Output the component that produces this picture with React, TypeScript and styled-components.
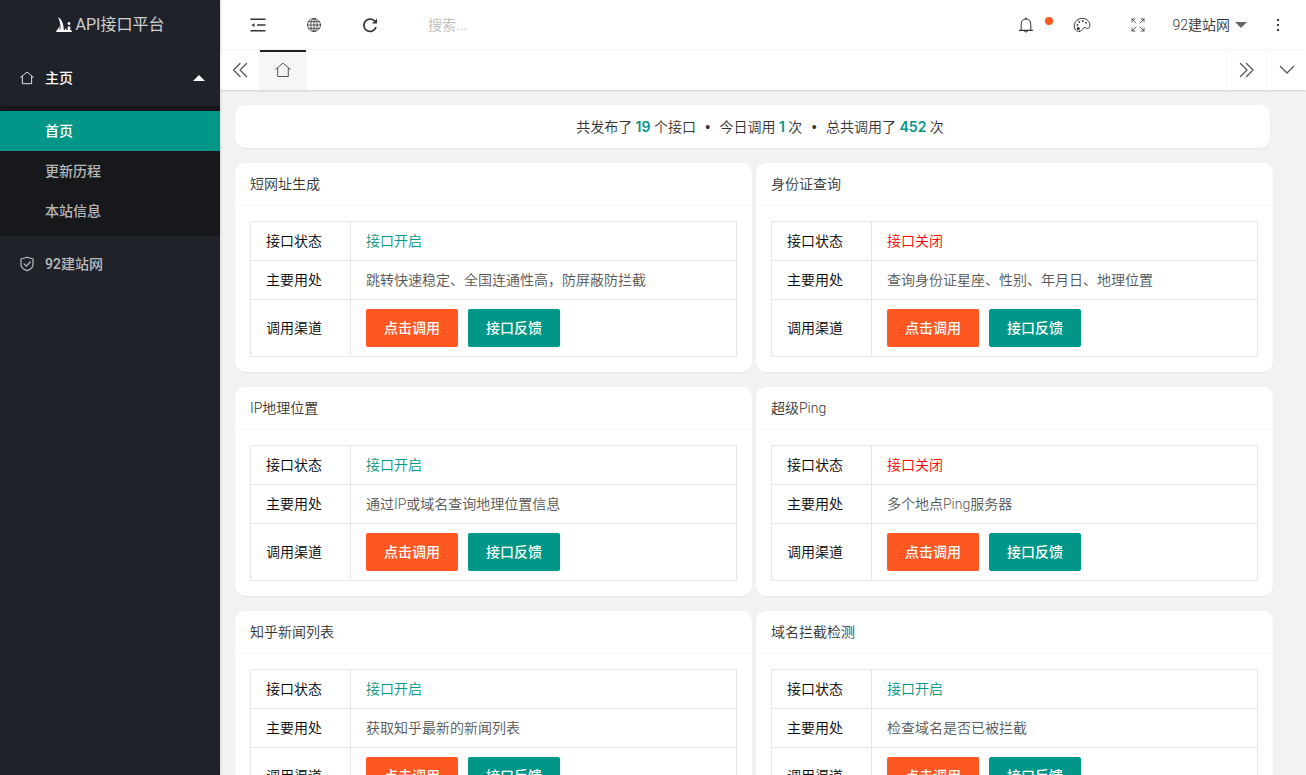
import React from "react";
import styled, { createGlobalStyle } from "styled-components";

const GlobalStyle = createGlobalStyle`
  *, *::before, *::after { box-sizing: border-box; }
  body {
    margin: 0;
    background: #f2f2f2;
    color: #333;
    font: 350 14px/20px Roboto, "Noto Sans CJK SC", sans-serif;
  }
  a { color: inherit; text-decoration: none; }
  ul { list-style: none; margin: 0; padding: 0; }
  button, input { font: inherit; border: 0; background: none; padding: 0; margin: 0; }
  button { cursor: pointer; }
  svg { display: block; flex: none; }
`;

const Shell = styled.div`
  display: flex;
  height: 100vh;
  overflow: hidden;
`;

const Sidebar = styled.aside`
  flex: 0 0 220px;
  background: #20222a;
  color: rgba(255, 255, 255, 0.7);
  box-shadow: 1px 0 2px rgba(0, 0, 0, 0.1);
  z-index: 2;
`;

const Brand = styled.a`
  display: flex;
  align-items: center;
  justify-content: center;
  gap: 4px;
  height: 50px;
  font-size: 16px;
  font-weight: 400;
  color: rgba(255, 255, 255, 0.8);
  box-shadow: 0 1px 2px rgba(0, 0, 0, 0.15);
`;

const NavLink = styled.a<{ $open?: boolean }>`
  display: flex;
  align-items: center;
  gap: 11px;
  height: 56px;
  padding: 0 15px 0 20px;
  font-weight: 500;
  color: ${(p) => (p.$open ? "#fff" : "rgba(255, 255, 255, 0.7)")};
`;

const NavText = styled.span`
  flex: 1;
`;

const SubNav = styled.ul`
  padding: 5px 0;
  background: #17181c;
  border-radius: 2px;
`;

const SubLink = styled.a<{ $active?: boolean }>`
  display: block;
  padding-left: 45px;
  line-height: 40px;
  font-weight: 500;
  color: ${(p) => (p.$active ? "#fff" : "rgba(255, 255, 255, 0.7)")};
  background: ${(p) => (p.$active ? "#009688" : "transparent")};
`;

const Main = styled.div`
  flex: 1;
  min-width: 0;
  display: flex;
  flex-direction: column;
`;

const Header = styled.header`
  display: flex;
  align-items: center;
  flex: 0 0 50px;
  padding-left: 10px;
  background: #fff;
  border-bottom: 1px solid #f6f6f6;
`;

const IconButton = styled.button`
  position: relative;
  display: flex;
  align-items: center;
  justify-content: center;
  width: 56px;
  height: 48px;
  color: #333;
`;

const Badge = styled.span`
  position: absolute;
  top: 16px;
  right: 1px;
  width: 8px;
  height: 8px;
  border-radius: 50%;
  background: #ff5722;
`;

const Search = styled.input`
  flex: 1;
  min-width: 0;
  height: 40px;
  padding-left: 30px;
  font-weight: 400;
  outline: 0;
  &::placeholder { color: #bfbfbf; opacity: 1; }
`;

const UserButton = styled.button`
  display: flex;
  align-items: center;
  gap: 5px;
  padding: 0 3px 0 6px;
  color: #333;
`;

const TabBar = styled.nav`
  display: flex;
  flex: 0 0 40px;
  background: #fff;
  box-shadow: 0 1px 2px rgba(0, 0, 0, 0.15);
  z-index: 1;
`;

const TabControl = styled.button<{ $side: "left" | "right" }>`
  display: flex;
  align-items: center;
  justify-content: center;
  width: 40px;
  color: #555;
  border-${(p) => (p.$side === "left" ? "right" : "left")}: 1px solid #f6f6f6;
`;

const HomeTab = styled.a`
  display: flex;
  align-items: center;
  justify-content: center;
  width: 47px;
  margin-right: auto;
  color: #555;
  background: #f6f6f6;
  border-right: 1px solid #f6f6f6;
  box-shadow: inset 0 2px #20222a;
`;

const Content = styled.main`
  flex: 1;
  min-height: 0;
  overflow-y: auto;
  scrollbar-width: none;
  padding: 15px 33px 15px 15px;
`;

const Summary = styled.section`
  margin: 0 3px 15px 0;
  padding-left: 15px;
  height: 43px;
  line-height: 43px;
  text-align: center;
  background: #fff;
  border-radius: 10px;
  box-shadow: 0 1px 2px rgba(0, 0, 0, 0.05);
`;

const Count = styled.b`
  font-family: Inter, sans-serif;
  font-weight: 600;
  color: #009688;
`;

const Separator = styled.span`
  margin: 0 6px;
  font-family: "Liberation Sans", sans-serif;
`;

const CardGrid = styled.div`
  display: grid;
  grid-template-columns: 1fr 1fr;
  gap: 15px 4px;
`;

const Card = styled.article`
  background: #fff;
  border-radius: 10px;
  box-shadow: 0 1px 2px rgba(0, 0, 0, 0.05);
`;

const CardTitle = styled.h2`
  margin: 0;
  padding: 0 15px;
  font-size: 14px;
  font-weight: 350;
  line-height: 42px;
  border-bottom: 1px solid #f6f6f6;
`;

const CardBody = styled.div`
  padding: 15px;
`;

const Table = styled.table`
  width: 100%;
  table-layout: fixed;
  border-collapse: collapse;
  th, td {
    padding: 9px 15px;
    border: 1px solid #e6e6e6;
    text-align: left;
    font-weight: 350;
  }
  th { width: 100px; color: #000; }
  td { color: #555; }
`;

const Status = styled.span<{ $open: boolean }>`
  color: ${(p) => (p.$open ? "#009688" : "#f00")};
`;

const Actions = styled.div`
  display: flex;
  gap: 10px;
`;

const ActionButton = styled.button<{ $tone: "call" | "feedback" }>`
  height: 38px;
  padding: 0 18px;
  color: #fff;
  font-weight: 500;
  white-space: nowrap;
  border-radius: 2px;
  background: ${(p) => (p.$tone === "call" ? "#ff5722" : "#009688")};
`;

const stroke = {
  fill: "none",
  stroke: "currentColor",
  strokeLinecap: "round" as const,
  strokeLinejoin: "round" as const,
};

const LogoIcon = () => (
  <svg width="16" height="16" viewBox="0 0 16 16" fill="#fff">
    <path d="M2 0C5.500 2 7.800 7 7.800 13.200H4.200C4.800 9.500 4.500 5 2 0Z" />
    <path d="M3.300 8.500C3 10.500 2 12 1 13H3.800Z" />
    <circle cx="13" cy="6.500" r="1.400" />
    <path d="M11.700 9.600H14.300V13H11.700ZM9 11.500H10.200V13H9Z" />
    <path d="M.8 13H15.200L16 15H0Z" />
  </svg>
);

const HomeIcon = ({ size }: { size: number }) => (
  <svg width={size} height={size} viewBox="0 0 16 16" {...stroke}>
    <path d="M.7 7.300 8 1.200l7.300 6.100M2.700 6.200v8.300h10.600V6.200" />
  </svg>
);

const ShieldIcon = () => (
  <svg width="14" height="16" viewBox="0 0 14 16" {...stroke} strokeWidth="1.200">
    <path d="M7 1.200 13 3v5.400c0 3-2.600 4.900-6 6.200-3.400-1.300-6-3.200-6-6.200V3ZM4 7.800l2.300 2.300L10.300 6" />
  </svg>
);

const CaretIcon = ({ up }: { up?: boolean }) => (
  <svg width="12" height="6" viewBox="0 0 12 6" fill={up ? "#fff" : "#666"}>
    <path d={up ? "M0 6 6 0l6 6Z" : "M0 0h12L6 6Z"} />
  </svg>
);

const IndentIcon = () => (
  <svg width="16" height="14" viewBox="0 0 16 14" fill="currentColor">
    <path d="M.5 .5h15V2H.5ZM7 6.300h8.500v1.500H7ZM.5 12h15v1.500H.5ZM4.500 5.200v3.700L1.500 7Z" />
  </svg>
);

const GlobeIcon = () => (
  <svg width="14" height="14" viewBox="0 0 14 14" {...stroke} strokeWidth=".8">
    <circle cx="7" cy="7" r="6.500" />
    <ellipse cx="7" cy="7" rx="3.200" ry="6.500" />
    <path d="M7 .5v13M.5 7h13M1.500 3.700h11M1.500 10.300h11" />
  </svg>
);

const RefreshIcon = () => (
  <svg width="16" height="16" viewBox="0 0 16 16" {...stroke} strokeWidth="1.700">
    <path d="M14 10A6.200 6.200 0 1 1 12.600 4" strokeLinecap="butt" />
    <path d="M15 1.500v5H10Z" fill="currentColor" stroke="none" />
  </svg>
);

const BellIcon = () => (
  <svg width="16" height="16" viewBox="0 0 16 16" {...stroke}>
    <path d="M3.200 13V7.200C3.200 4 5.200 2 8 2s4.800 2 4.800 5.200V13M6.400 14.300c.6 1 2.600 1 3.200 0M7.300 1.300h1.400" />
    <path d="M1.500 13.300h13" strokeWidth="1.300" />
  </svg>
);

const PaletteIcon = () => (
  <svg width="18" height="16" viewBox="0 0 18 16" {...stroke}>
    <path d="M6.500 14.300C3 14.800 1 12 1.200 8.800 1.500 4.300 5 1.500 9.300 1.500c4.500 0 7.500 3 7.500 6.300 0 2.300-.8 4-2.400 3.700-1.200-.2-2-1.500-3.500-.8-1.400.7-.8 3.100-4.400 3.600Z" />
    <g fill="currentColor" stroke="none">
      <circle cx="4.500" cy="8" r=".9" />
      <circle cx="6.300" cy="4.900" r=".9" />
      <circle cx="9.800" cy="4" r=".9" />
      <circle cx="13" cy="5.700" r=".9" />
      <circle cx="5.300" cy="11.500" r="1.500" />
    </g>
  </svg>
);

const FullscreenIcon = () => (
  <svg width="14" height="14" viewBox="0 0 14 14" {...stroke}>
    <path d="M1 4V1h3M1 1l4 4M10 1h3v3M13 1 9 5M1 10v3h3M1 13l4-4M13 10v3h-3M13 13 9 9" strokeWidth=".8" />
  </svg>
);

const MoreIcon = () => (
  <svg width="4" height="14" viewBox="0 0 4 14" fill="currentColor">
    <path d="M1 1h2v2H1ZM1 6h2v2H1ZM1 11h2v2H1Z" />
  </svg>
);

const DoubleChevron = ({ right }: { right?: boolean }) => (
  <svg width="16" height="16" viewBox="0 0 16 16" {...stroke} strokeWidth="1.300">
    <path d={right ? "m1.500 1.500 6.500 6.500L1.500 14.500M7.500 1.500 14 8 7.500 14.500" : "M8 1.500 1.500 8 8 14.500M14.500 1.500 8 8l6.500 6.500"} />
  </svg>
);

const ChevronDown = () => (
  <svg width="16" height="16" viewBox="0 0 16 16" {...stroke} strokeWidth="1.300">
    <path d="M1.500 4.500 8 11l6.500-6.500" />
  </svg>
);

interface Api {
  name: string;
  open: boolean;
  usage: string;
}

const apis: Api[] = [
  { name: "短网址生成", open: true, usage: "跳转快速稳定、全国连通性高，防屏蔽防拦截" },
  { name: "身份证查询", open: false, usage: "查询身份证星座、性别、年月日、地理位置" },
  { name: "IP地理位置", open: true, usage: "通过IP或域名查询地理位置信息" },
  { name: "超级Ping", open: false, usage: "多个地点Ping服务器" },
  { name: "知乎新闻列表", open: true, usage: "获取知乎最新的新闻列表" },
  { name: "域名拦截检测", open: true, usage: "检查域名是否已被拦截" },
];

const ApiCard = ({ api }: { api: Api }) => (
  <Card>
    <CardTitle>{api.name}</CardTitle>
    <CardBody>
      <Table>
        <tbody>
          <tr>
            <th scope="row">接口状态</th>
            <td>
              <Status $open={api.open}>{api.open ? "接口开启" : "接口关闭"}</Status>
            </td>
          </tr>
          <tr>
            <th scope="row">主要用处</th>
            <td>{api.usage}</td>
          </tr>
          <tr>
            <th scope="row">调用渠道</th>
            <td>
              <Actions>
                <ActionButton $tone="call">点击调用</ActionButton>
                <ActionButton $tone="feedback">接口反馈</ActionButton>
              </Actions>
            </td>
          </tr>
        </tbody>
      </Table>
    </CardBody>
  </Card>
);

export default function App() {
  return (
    <>
      <GlobalStyle />
      <Shell>
        <Sidebar>
          <Brand href="#">
            <LogoIcon />
            API接口平台
          </Brand>
          <NavLink href="#" $open>
            <HomeIcon size={14} />
            <NavText>主页</NavText>
            <CaretIcon up />
          </NavLink>
          <SubNav>
            <li><SubLink href="#" $active>首页</SubLink></li>
            <li><SubLink href="#">更新历程</SubLink></li>
            <li><SubLink href="#">本站信息</SubLink></li>
          </SubNav>
          <NavLink href="#">
            <ShieldIcon />
            <NavText>92建站网</NavText>
          </NavLink>
        </Sidebar>
        <Main>
          <Header>
            <IconButton aria-label="侧边伸缩"><IndentIcon /></IconButton>
            <IconButton aria-label="前台"><GlobeIcon /></IconButton>
            <IconButton aria-label="刷新"><RefreshIcon /></IconButton>
            <Search type="text" placeholder="搜索..." aria-label="搜索" />
            <IconButton aria-label="消息">
              <BellIcon />
              <Badge />
            </IconButton>
            <IconButton aria-label="主题"><PaletteIcon /></IconButton>
            <IconButton aria-label="全屏"><FullscreenIcon /></IconButton>
            <UserButton>
              92建站网
              <CaretIcon />
            </UserButton>
            <IconButton aria-label="更多"><MoreIcon /></IconButton>
          </Header>
          <TabBar>
            <TabControl $side="left" aria-label="向左"><DoubleChevron /></TabControl>
            <HomeTab href="#" aria-label="主页"><HomeIcon size={16} /></HomeTab>
            <TabControl $side="right" aria-label="向右"><DoubleChevron right /></TabControl>
            <TabControl $side="right" aria-label="标签操作"><ChevronDown /></TabControl>
          </TabBar>
          <Content>
            <Summary>
              共发布了 <Count>19</Count> 个接口 <Separator>•</Separator> 今日调用 <Count>1</Count> 次{" "}
              <Separator>•</Separator> 总共调用了 <Count>452</Count> 次
            </Summary>
            <CardGrid>
              {apis.map((api) => (
                <ApiCard key={api.name} api={api} />
              ))}
            </CardGrid>
          </Content>
        </Main>
      </Shell>
    </>
  );
}
